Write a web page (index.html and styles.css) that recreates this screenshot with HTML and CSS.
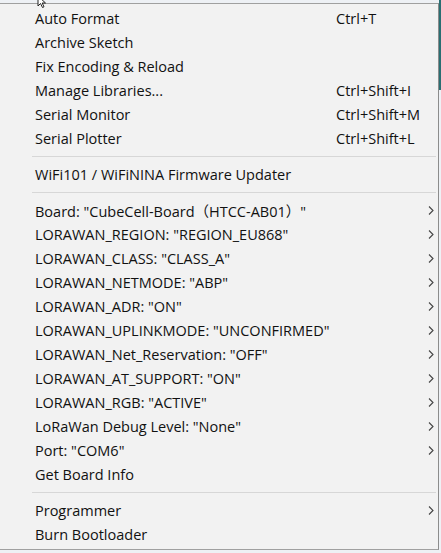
FILE: index.html
```html
<!DOCTYPE html>
<html lang="en">
<head>
    <meta charset="UTF-8">
    <title>Tools</title>
    <link rel="stylesheet" href="styles.css">
</head>
<body>
<div class="screen">
    <svg class="cursor" width="12" height="8" viewBox="0 0 12 8">
        <path d="M1 -4 L1 6 L3.5 3.5 L5.5 7.5 L7 6.8 L5.2 3 L8.5 3 Z" fill="#fff" stroke="#222" stroke-width="1"/>
    </svg>
    <div class="menu">
        <div class="item"><span class="label">Auto Format</span><span class="key">Ctrl+T</span></div>
        <div class="item"><span class="label">Archive Sketch</span></div>
        <div class="item"><span class="label">Fix Encoding &amp; Reload</span></div>
        <div class="item"><span class="label">Manage Libraries...</span><span class="key">Ctrl+Shift+I</span></div>
        <div class="item"><span class="label">Serial Monitor</span><span class="key">Ctrl+Shift+M</span></div>
        <div class="item"><span class="label">Serial Plotter</span><span class="key">Ctrl+Shift+L</span></div>
        <div class="sep"></div>
        <div class="item"><span class="label">WiFi101 / WiFiNINA Firmware Updater</span></div>
        <div class="sep"></div>
        <div class="item sub"><span class="label">Board: "CubeCell-Board（HTCC-AB01）"</span></div>
        <div class="item sub"><span class="label">LORAWAN_REGION: "REGION_EU868"</span></div>
        <div class="item sub"><span class="label">LORAWAN_CLASS: "CLASS_A"</span></div>
        <div class="item sub"><span class="label">LORAWAN_NETMODE: "ABP"</span></div>
        <div class="item sub"><span class="label">LORAWAN_ADR: "ON"</span></div>
        <div class="item sub"><span class="label">LORAWAN_UPLINKMODE: "UNCONFIRMED"</span></div>
        <div class="item sub"><span class="label">LORAWAN_Net_Reservation: "OFF"</span></div>
        <div class="item sub"><span class="label">LORAWAN_AT_SUPPORT: "ON"</span></div>
        <div class="item sub"><span class="label">LORAWAN_RGB: "ACTIVE"</span></div>
        <div class="item sub"><span class="label">LoRaWan Debug Level: "None"</span></div>
        <div class="item sub"><span class="label">Port: "COM6"</span></div>
        <div class="item"><span class="label">Get Board Info</span></div>
        <div class="sep"></div>
        <div class="item sub"><span class="label">Programmer</span></div>
        <div class="item"><span class="label">Burn Bootloader</span></div>
    </div>
</div>
</body>
</html>
```

FILE: styles.css
```css
*{
    margin: 0;
    padding: 0;
    box-sizing: border-box;
}
body{
    background-color: #eef1f5;
    font-family: "Open Sans", "Noto Sans CJK SC", sans-serif;
    font-size: 14.5px;
    color: #111111;
}
.screen{
    position: relative;
    width: 441px;
    height: 553px;
    padding-top: 3px;
    background: linear-gradient(#2a6e72, #2a6e72) no-repeat right top / 2px 90px, #eef1f5;
}
.cursor{
    position: absolute;
    left: 37px;
    top: 0;
}
.menu{
    width: 439px;
    height: 547px;
    background-color: #f2f2f2;
    border-top: 1px solid #a0a0a0;
    border-right: 1px solid #8c8c8c;
    border-bottom: 1px solid #a0a0a0;
    padding-top: 2px;
}
.item{
    display: grid;
    grid-template-columns: 301px 1fr;
    align-items: center;
    height: 24px;
    padding-left: 35px;
    white-space: nowrap;
}
.sub{
    background: url("data:image/svg+xml,%3Csvg xmlns='http://www.w3.org/2000/svg' width='6' height='9'%3E%3Cpath d='M1 0.5 L5 4.5 L1 8.5' fill='none' stroke='%23444' stroke-width='1.1'/%3E%3C/svg%3E") no-repeat 428px 8px;
}
.sep{
    height: 12px;
    margin-left: 32px;
    margin-right: 2px;
    border-top: 6px solid #f2f2f2;
    border-bottom: 5px solid #f2f2f2;
    background-color: #d7d7d7;
}
```
